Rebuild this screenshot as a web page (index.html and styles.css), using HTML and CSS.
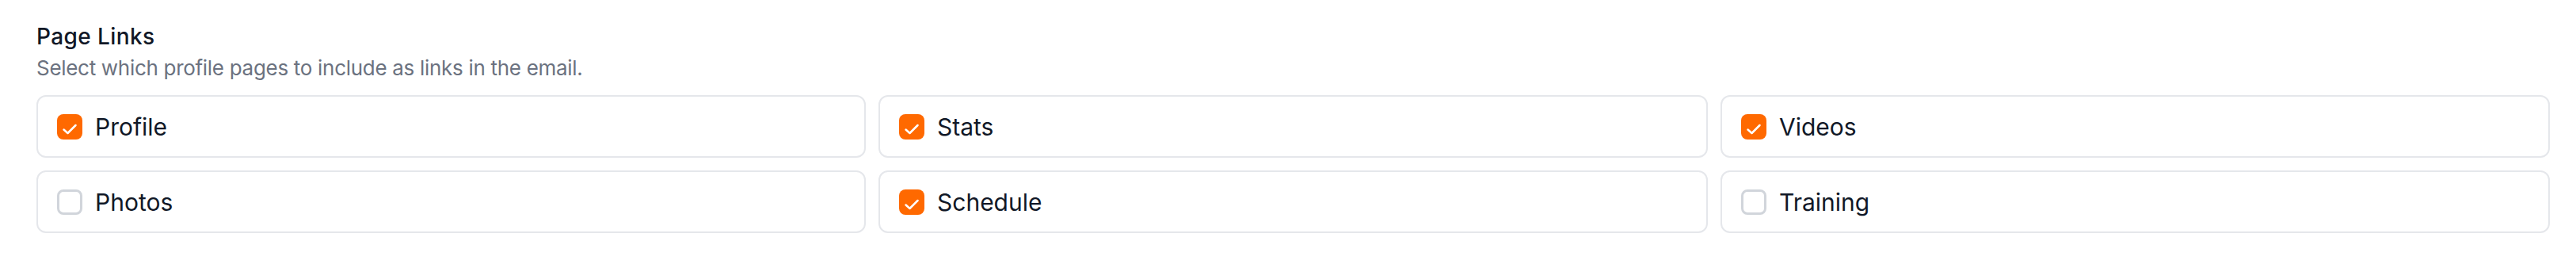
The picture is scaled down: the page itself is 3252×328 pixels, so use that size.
FILE: index.html
```html
<!DOCTYPE html>
<html lang="en">
<head>
<meta charset="utf-8">
<title>Page Links</title>
<link rel="stylesheet" href="styles.css">
</head>
<body>
<section class="section">
  <h2 class="title">Page Links</h2>
  <p class="subtitle">Select which profile pages to include as links in the email.</p>
  <div class="grid">
    <label class="option"><span class="box checked"><svg viewBox="0 0 32 32"><polyline points="8.5,19.5 13.5,24 23.5,14"/></svg></span><span class="label">Profile</span></label>
    <label class="option"><span class="box checked"><svg viewBox="0 0 32 32"><polyline points="8.5,19.5 13.5,24 23.5,14"/></svg></span><span class="label">Stats</span></label>
    <label class="option"><span class="box checked"><svg viewBox="0 0 32 32"><polyline points="8.5,19.5 13.5,24 23.5,14"/></svg></span><span class="label">Videos</span></label>
    <label class="option"><span class="box"></span><span class="label">Photos</span></label>
    <label class="option"><span class="box checked"><svg viewBox="0 0 32 32"><polyline points="8.5,19.5 13.5,24 23.5,14"/></svg></span><span class="label">Schedule</span></label>
    <label class="option"><span class="box"></span><span class="label">Training</span></label>
  </div>
</section>
</body>
</html>
```

FILE: styles.css
```css
html, body {
  margin: 0;
  padding: 0;
  background: #ffffff;
}

body {
  font-family: Inter, "Liberation Sans", sans-serif;
  color: #111827;
}

.section {
  padding: 26px 33px 0 46px;
}

.title {
  margin: 0;
  font-size: 28px;
  line-height: 40px;
  font-weight: 500;
  letter-spacing: 0.4px;
  color: #111827;
}

.subtitle {
  margin: 2px 0 16px;
  font-size: 26px;
  line-height: 36px;
  letter-spacing: -0.3px;
  color: #6b7280;
}

.grid {
  display: grid;
  grid-template-columns: repeat(3, 1fr);
  gap: 16px;
}

.option {
  display: flex;
  align-items: center;
  gap: 16px;
  height: 79px;
  box-sizing: border-box;
  padding: 0 24px;
  border: 2px solid #e5e7eb;
  border-radius: 12px;
  background: #ffffff;
}

.box {
  flex: none;
  width: 32px;
  height: 32px;
  box-sizing: border-box;
  border: 3.5px solid #d1d5db;
  border-radius: 8px;
  background: #ffffff;
  display: flex;
}

.box.checked {
  border: none;
  background: #ff6900;
}

.box svg {
  width: 32px;
  height: 32px;
  fill: none;
  stroke: #ffffff;
  stroke-width: 2.5;
  stroke-linecap: round;
  stroke-linejoin: round;
}

.label {
  font-size: 30px;
  line-height: 40px;
  color: #111827;
}
```
